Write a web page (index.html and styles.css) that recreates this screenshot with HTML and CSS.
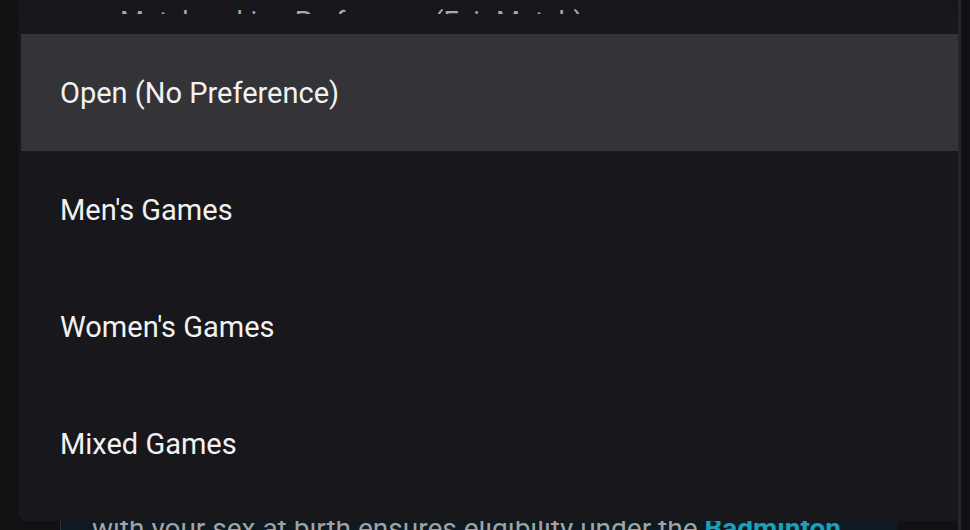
FILE: index.html
```html
<!DOCTYPE html>
<html>
<head>
  <title>Matchmaking Preference</title>
  <link rel="stylesheet" href="styles.css">
</head>
<body>
  <div class="page">
    <p class="field-title">Matchmaking Preference (Fair Match)</p>
    <div class="filler"></div>
    <div class="notice-row">
      <div class="notice">
        with your sex at birth ensures eligibility under the <a href="#">Badminton</a>
      </div>
    </div>
  </div>

  <!-- select popup -->
  <ul class="menu">
    <li class="menu-item selected">Open (No Preference)</li>
    <li class="menu-item">Men's Games</li>
    <li class="menu-item">Women's Games</li>
    <li class="menu-item">Mixed Games</li>
  </ul>
</body>
</html>
```

FILE: styles.css
```css
html, body {
  margin: 0;
  height: 530px;
  overflow: hidden;
}
body {
  background-color: #111114;
  font-family: Roboto, "Noto Sans", sans-serif;
  position: relative;
}
.page {
  margin-left: 18px;
  width: 940px;
  height: 530px;
  background-color: #17171b;
  border-right: 3px solid #26262a;
  display: flex;
  flex-direction: column;
}
.field-title {
  flex: none;
  margin: 6px 0 0 0;
  padding-left: 102px;
  font-size: 27.5px;
  line-height: 32px;
  color: #a8a8aa;
  white-space: nowrap;
}
.filler {
  flex: 1;
}
.notice-row {
  flex: none;
  background-color: #111113;
  padding-left: 42px;
}
.notice {
  width: 806px;
  height: 14px;
  padding-left: 31px;
  background-color: #0e1a22;
  border-left: 1px solid #1d3442;
  font-size: 28px;
  line-height: 26px;
  color: #a3a3a6;
  white-space: nowrap;
  overflow: hidden;
}
.notice a {
  color: #17a2b8;
  font-weight: bold;
  text-decoration: none;
}
.menu {
  position: absolute;
  left: 21px;
  top: 14px;
  width: 937px;
  margin: 0;
  padding: 20px 0 19px 0;
  list-style: none;
  background-color: #18181c;
}
.menu-item {
  height: 117px;
  display: flex;
  align-items: center;
  padding-left: 39px;
  font-size: 29px;
  color: #f2f2f2;
}
.menu-item.selected {
  background-color: #333338;
}
```
